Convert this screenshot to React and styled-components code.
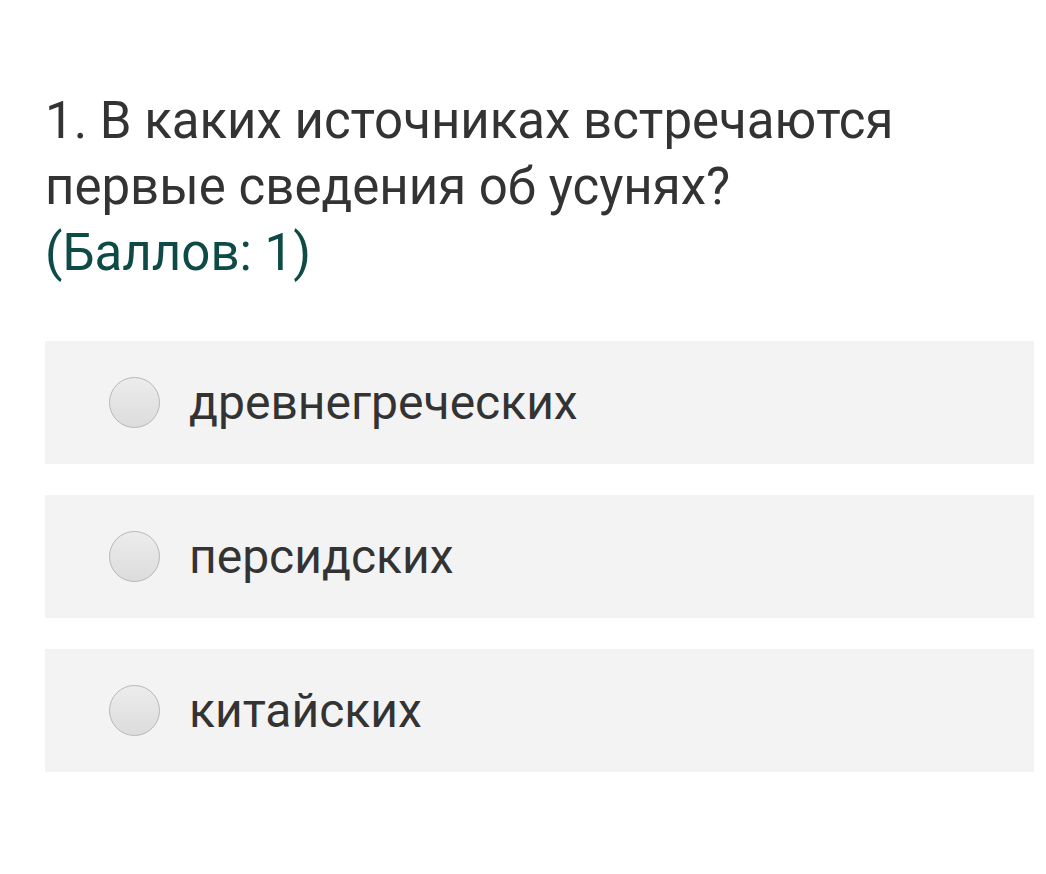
import React from "react";
import styled, { createGlobalStyle } from "styled-components";

const GlobalStyle = createGlobalStyle`
  body {
    margin: 0;
    background: #ffffff;
    font-family: Roboto, "Noto Sans", sans-serif;
  }
`;

const Page = styled.div`
  padding: 88px 12px 0 45px;
`;

const Question = styled.div`
  font-size: 51px;
  line-height: 66px;
  color: #333333;
  padding-right: 100px;
`;

const Points = styled.div`
  color: #0e4a46;
`;

const Options = styled.div`
  margin-top: 55px;
  display: flex;
  flex-direction: column;
  gap: 31px;
`;

const Option = styled.label`
  display: flex;
  align-items: center;
  height: 123px;
  background: #f3f3f3;
  padding-left: 64px;
  gap: 29px;
  cursor: pointer;
`;

const Radio = styled.span`
  width: 51px;
  height: 51px;
  border-radius: 50%;
  border: 1px solid #b8b8b8;
  background: linear-gradient(#ececec, #dcdcdc);
  box-sizing: border-box;
  flex-shrink: 0;
`;

const OptionText = styled.span`
  font-size: 48px;
  color: #333333;
`;

const answers = ["древнегреческих", "персидских", "китайских"];

export default function App() {
  return (
    <>
      <GlobalStyle />
      <Page>
        <Question>
          1. В каких источниках встречаются первые сведения об усунях?
          <Points>(Баллов: 1)</Points>
        </Question>
        <Options>
          {answers.map((a) => (
            <Option key={a}>
              <Radio />
              <OptionText>{a}</OptionText>
            </Option>
          ))}
        </Options>
      </Page>
    </>
  );
}
